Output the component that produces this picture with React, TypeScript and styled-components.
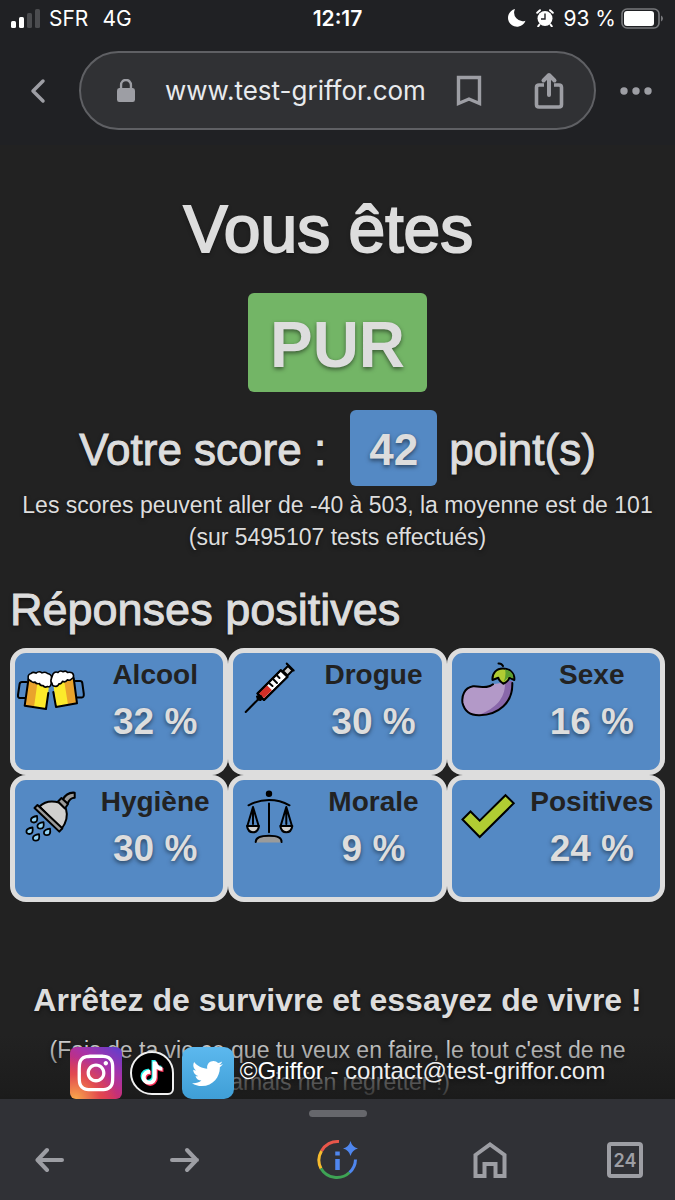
import type { ReactNode } from "react"
import styled, { createGlobalStyle } from "styled-components"
import { FaInstagram, FaTiktok, FaTwitter } from "react-icons/fa"

type Category = {
    id: number;
    name: string;
    score: number;
    icon: ReactNode;
};

const BeerIcon = () => (
    <Emoji viewBox="0 0 72 72">
        <path fill="none" d="M11.5 29H7q-2 0-2.400 2L3 42q-.3 3 2 3h6" />
        <path fill="none" d="M60.500 28H65q2 0 2.300 2l1.500 11q.2 3.500-2 3.500h-5.500" />
        <path stroke="none" fill="#fcea2b" d="M13.500 24 9.700 52.700 31 56l3-23-1-10Z" />
        <path stroke="none" fill="#e9a32c" d="M13.500 26 9.700 52.700l9.300 1.500L22.500 29Z" />
        <path stroke="none" fill="#fcea2b" d="M38 28l3 26 21-3.700L58.500 23Z" />
        <path stroke="none" fill="#e9a32c" d="M49.500 30 53 51.800l9-1.500L58.500 24Z" />
        <path fill="none" d="M13.500 26 9.700 52.700 31 56l2.300-16M38.300 39 41 54l21-3.700L58.700 25" />
        <path fill="#fff" strokeWidth="1.600" d="M13.500 26.500q-1.500-5 2.500-6 2-2 5-.4 3-2.500 6-.2 3-1.500 5.500.6 4.500 1 4 4.500 1 4-.5 6-.5 3.500-3.500 2.500-3 1.500-4.500-1-3 .5-3.500-2-3 1-4.500-1.500-2 1-3.500-.5Z" />
        <path fill="#fff" strokeWidth="1.600" d="M38 21q2-3 5-1.500 2-2.500 5-.8 3-1.500 4.500.8 5-1 6 2.500.5 3-2 4-2 2-4 .8-2 3-5 1.500-1 3-3.500 2.500-1 3-4 2.500-3 0-3-3-2-2-.5-5Z" />
    </Emoji>
)

const SyringeIcon = () => (
    <Emoji viewBox="0 0 72 72">
        <path d="M12.700 59 26 45.500" />
        <path fill="#d0cfce" d="m50 18 5-5 4.500 4.500-5 5Z" />
        <path d="m53.700 10.500 7 7" />
        <path fill="#fff" d="m24.500 40.500 23.300-23.300 6.700 6.700L31 47Z" />
        <path stroke="none" fill="#d22f27" d="m25.800 40.500 8.200-8.200 5 5-8 8Z" />
        <path d="m24.500 40.500 23.300-23.300 6.700 6.700L31 47Z" fill="none" />
        <path d="m24 43.500 3.500 3.500M36 30l3.500 3M40 26l4 4M44 22.500l2.500 2.500" />
        <circle cx="26.500" cy="44.800" r="2" fill="#000" />
    </Emoji>
)

const EggplantIcon = () => (
    <Emoji viewBox="0 0 72 72">
        <path stroke="none" fill="#b399c8" d="M41 31.300c-6 5-13 1.500-20 2C12 35 9.500 43 10.500 50c2 8 8 12.500 17 12.300C46 62 61 50 60.300 28Z" />
        <path stroke="none" fill="#8967aa" d="M53 28c1 17-9 27-25 33.500C46 62 61 50 60.300 28Z" />
        <path fill="none" d="M41 31.300c-6 5-13 1.500-20 2C12 35 9.500 43 10.500 50c2 8 8 12.500 17 12.300C46 62 61 50 60.300 30" />
        <path fill="#b1cc33" d="M40.500 27c-.5-7 4-11.500 10.500-11.500S63 20 62.300 27l-5-2.300q-1 4-6 6-4.500-3-5-6Z" />
        <path stroke="none" fill="#5c9e31" d="M53 16.500c6 1 8.500 4 8.300 9l-4.300-2-5.500 5.500q3-6 1.500-12.500Z" />
        <path fill="none" d="M46.500 10.500q3-.3 4.500 2.500" />
    </Emoji>
)

const ShowerIcon = () => (
    <Emoji viewBox="0 0 72 72">
        <path fill="#9b9b9a" d="M59.700 12.700q-8-.8-12 7l5 4q2-6 7-6Z" />
        <path fill="#d0cfce" d="M24.500 26.500Q32 19 44 22.500l7 6.500q3 10-4.500 20Z" />
        <path fill="#9b9b9a" d="m43 21.500 3.500-3.500 6.500 6-3 4.500Z" />
        <path fill="#9b9b9a" d="m19.500 28 3-3 24.800 23.300-3 3.300Z" />
        {[[19, 39.500], [25.500, 45.700], [14.500, 51], [32, 52.200], [21, 57.700]].map(([x, y]) => (
            <path key={x} fill="#92d3f5" strokeWidth="1.800" d={`M${x + 3} ${y - 3.500}q1.200 6.500-3 6.500-3.500-.2-3-3.200.7-2.600 6-3.300Z`} />
        ))}
    </Emoji>
)

const ScalesIcon = () => (
    <Emoji viewBox="0 0 72 72">
        <circle cx="36" cy="13.700" r="2.200" fill="#000" />
        <path fill="none" d="M15.500 25.300Q25 20 36 20t20.500 5.300M36 23.500v28.800" />
        <path stroke="none" fill="#9b9b9a" d="M22.700 62.500q1.500-7 13.300-7t12.500 7Z" />
        <path fill="none" d="M22.700 62q0-6.300 13.300-6.300T48.500 62" />
        {[20, 53.300].map((x) => (
            <g key={x}>
                <path fill="#d0cfce" d={`M${x - 6} 46h12q-1 6.300-6 6.300t-6-6.300Z`} />
                <path fill="none" d={`M${x - 5.500} 45.500 ${x} 27l5.500 18.500M${x} 28v16`} />
            </g>
        ))}
    </Emoji>
)

const CheckIcon = () => (
    <Emoji viewBox="0 0 72 72">
        <path fill="#b1cc33" strokeLinejoin="miter" d="m10.500 39.500 8-8 9.200 9.200 25.800-25.500 8.200 8.100-34 33.700Z" />
    </Emoji>
)

const categories: Category[] = [
    { id: 1, name: "Alcool", score: 32, icon: <BeerIcon /> },
    { id: 2, name: "Drogue", score: 30, icon: <SyringeIcon /> },
    { id: 3, name: "Sexe", score: 16, icon: <EggplantIcon /> },
    { id: 4, name: "Hygiène", score: 30, icon: <ShowerIcon /> },
    { id: 5, name: "Morale", score: 9, icon: <ScalesIcon /> },
    { id: 6, name: "Positives", score: 24, icon: <CheckIcon /> },
]

const StatusBar = () => (
    <Status>
        <StatusGroup $side="start">
            <svg width="30" height="20" viewBox="0 0 30 20">
                <rect x="0" y="13" width="5" height="7" rx="1.500" fill="#fff" />
                <rect x="8" y="9" width="5" height="11" rx="1.500" fill="#fff" />
                <rect x="16" y="5" width="5" height="15" rx="1.500" fill="#4b4c4f" />
                <rect x="24" y="1" width="5" height="19" rx="1.500" fill="#4b4c4f" />
            </svg>
            <Carrier>SFR</Carrier>
            <span>4G</span>
        </StatusGroup>
        <Clock>12:17</Clock>
        <StatusGroup $side="end">
            <svg width="18" height="18" viewBox="0 0 18 18">
                <path fill="#fff" d="M7 0A9 9 0 1 0 17.500 11.800 8.600 8.600 0 0 1 7 0Z" />
            </svg>
            <Alarm width="18" height="18" viewBox="0 0 18 18">
                <circle cx="9" cy="9.500" r="7.500" fill="#fff" />
                <path d="M1.200 3.800 4 1.200M16.800 3.800 14 1.200M3.500 15.500l-1.300 1.800M14.500 15.500l1.300 1.800" stroke="#fff" strokeWidth="2" strokeLinecap="round" />
                <path d="M9 4.500v5.500H5" fill="none" stroke="#202124" strokeWidth="1.400" />
            </Alarm>
            <span>93 %</span>
            <Battery width="43" height="21" viewBox="0 0 43 21">
                <rect x="1" y="1" width="37" height="19" rx="5" fill="none" stroke="#77787b" strokeWidth="1.600" />
                <rect x="3" y="3" width="30" height="15" rx="3" fill="#fff" />
                <path d="M40 7.500q2 .8 2 3t-2 3Z" fill="#77787b" />
            </Battery>
        </StatusGroup>
    </Status>
)

const AddressBar = () => (
    <Address>
        <BarButton aria-label="Retour">
            <svg width="20" height="26" viewBox="0 0 20 26">
                <path d="M13 3 3 13l10 10" {...line} strokeWidth="3.500" />
            </svg>
        </BarButton>
        <UrlPill>
            <svg width="18" height="24" viewBox="0 0 20 24" preserveAspectRatio="none">
                <rect x="0" y="9" width="20" height="14" rx="2.500" fill="#9d9ea4" />
                <path d="M4.500 10V6a5.500 5 0 0 1 11 0v4" fill="none" stroke="#9d9ea4" strokeWidth="2.600" />
            </svg>
            <UrlText href="#">www.test-griffor.com</UrlText>
            <PillButton aria-label="Favori">
                <svg width="26" height="32" viewBox="0 0 26 32">
                    <path d="M2.500 2.500h21v26L13 24 2.500 28.500Z" fill="none" stroke="#9d9ea4" strokeWidth="3.400" />
                </svg>
            </PillButton>
            <PillButton aria-label="Partager">
                <svg width="30" height="38" viewBox="0 0 30 38">
                    <path d="M10 13H5q-2.500 0-2.500 2.500v17Q2.500 35 5 35h20q2.500 0 2.500-2.500v-17Q27.500 13 25 13h-5" fill="none" stroke="#9d9ea4" strokeWidth="3.600" />
                    <path d="M15 23V4M9.500 8.500 15 3l5.500 5.500" {...line} />
                </svg>
            </PillButton>
        </UrlPill>
        <BarButton aria-label="Menu">
            <svg width="32" height="8" viewBox="0 0 32 8">
                <circle cx="4" cy="4" r="3.700" fill="#9d9ea4" />
                <circle cx="16" cy="4" r="3.700" fill="#9d9ea4" />
                <circle cx="28" cy="4" r="3.700" fill="#9d9ea4" />
            </svg>
        </BarButton>
    </Address>
)

const line = {
    fill: "none",
    stroke: "#9d9ea4",
    strokeWidth: 4,
    strokeLinecap: "round",
    strokeLinejoin: "round",
} as const

const BottomBar = () => (
    <Bottom>
        <Handle />
        <Tools>
            <ToolGroup>
                <BarButton aria-label="Page précédente">
                    <svg width="30" height="26" viewBox="0 0 30 26"><path d="M27 13H3M12 3 2.500 13l9.500 10" {...line} /></svg>
                </BarButton>
                <BarButton aria-label="Page suivante">
                    <svg width="30" height="26" viewBox="0 0 30 26"><path d="M2 13h25M17 3l9.500 10L17 23" {...line} /></svg>
                </BarButton>
            </ToolGroup>
            <BarButton aria-label="Informations">
                <svg width="42" height="42" viewBox="0 0 42 42" fill="none" strokeWidth="3">
                    <path d="M23 2.500A18 18 0 0 0 5.500 12" stroke="#e8564a" />
                    <path d="M5.500 12a18 18 0 0 0-.5 17.500" stroke="#f6bb2e" />
                    <path d="M5 29.500a18.500 18.500 0 0 0 28.500 4" stroke="#3ea355" />
                    <path d="M33.500 33.500a18 18 0 0 0 6-13" stroke="#4f86ee" />
                    <path d="M21.500 12.500v4M21.500 20v11" stroke="#4f86ee" strokeWidth="4.500" />
                    <path d="M34.500 2q1.500 6 7.500 7.500-6 1.500-7.500 7.500-1.500-6-7.500-7.500 6-1.500 7.500-7.500Z" fill="#4f86ee" stroke="none" />
                </svg>
            </BarButton>
            <ToolGroup>
                <BarButton aria-label="Accueil">
                    <svg width="34" height="38" viewBox="0 0 34 38">
                        <path d="M2.500 14 17 3.500 31.500 14v21h-9V23h-11v12h-9Z" fill="none" stroke="#9d9ea4" strokeWidth="4" />
                    </svg>
                </BarButton>
                <TabsButton aria-label="Onglets">24</TabsButton>
            </ToolGroup>
        </Tools>
    </Bottom>
)

export default function App() {
    return (
        <Shell>
            <GlobalStyle />
            <Header>
                <StatusBar />
                <AddressBar />
            </Header>

            <Page>
                <Title>Vous êtes&nbsp;</Title>
                <Result>PUR</Result>
                <Score>
                    <span>Votre score :</span>
                    <Points>42</Points>
                    <span>point(s)</span>
                </Score>
                <Note>
                    Les scores peuvent aller de -40 à 503, la moyenne est de 101
                    <br />
                    (sur 5495107 tests effectués)
                </Note>

                <Subtitle>Réponses positives</Subtitle>
                <Cards>
                    {categories.map((category) => (
                        <Card key={category.id}>
                            {category.icon}
                            <CardText>
                                <CardName>{category.name}</CardName>
                                <CardScore>{category.score} %</CardScore>
                            </CardText>
                        </Card>
                    ))}
                </Cards>

                <Advice>Arrêtez de survivre et essayez de vivre !</Advice>
                <Note>
                    (Fais de ta vie ce que tu veux en faire, le tout c'est de ne
                    <br />
                    jamais rien regretter !)
                </Note>

                <Footer>
                    <Instagram href="#" aria-label="Instagram"><FaInstagram size={42} /></Instagram>
                    <Tiktok href="#" aria-label="TikTok">
                        <svg width="26" height="28" viewBox="0 0 24 26">
                            <FaTiktok x="0" y="1" size={22} color="#25f4ee" />
                            <FaTiktok x="2" y="3" size={22} color="#fe2c55" />
                            <FaTiktok x="1" y="2" size={22} color="#fff" />
                        </svg>
                    </Tiktok>
                    <Twitter href="#" aria-label="Twitter"><FaTwitter size={31} /></Twitter>
                    <Copyright>
                        ©Griffor - <Mail href="#">contact@test-griffor.com</Mail>
                    </Copyright>
                </Footer>
            </Page>

            <BottomBar />
        </Shell>
    )
}

const GlobalStyle = createGlobalStyle`
* {
    box-sizing: border-box;
}
body {
    margin: 0;
    background: #222222;
}
button {
    padding: 0;
    border: none;
    background: none;
}
svg {
    display: block;
    flex: none;
}
`

const Shell = styled.div`
display: flex;
flex-direction: column;
height: 100vh;
color: #dddddd;
font-family: "Liberation Sans", Arial, sans-serif;
`

const Header = styled.header`
padding-bottom: 15px;
background: #202124;
font-family: Inter, sans-serif;
`

const Status = styled.div`
display: grid;
grid-template-columns: 1fr auto 1fr;
align-items: center;
height: 36px;
padding: 0 11px;
color: #ffffff;
font-size: 21px;
`

const StatusGroup = styled.div<{ $side: string }>`
display: flex;
align-items: center;
justify-content: ${(props) => props.$side};
`

const Carrier = styled.span`
margin: 0 14px 0 8px;
`

const Clock = styled.span`
font-weight: 600;
`

const Alarm = styled.svg`
margin: 0 9px 0 10px;
`

const Battery = styled.svg`
margin-left: 5px;
`

const Address = styled.div`
display: flex;
align-items: center;
margin-top: 15px;
`

const BarButton = styled.button`
display: flex;
align-items: center;
justify-content: center;
width: 79px;
height: 60px;
`

const UrlPill = styled.div`
display: flex;
flex: 1;
align-items: center;
height: 79px;
padding: 0 30px 0 36px;
border: 2px solid #5f6064;
border-radius: 40px;
background: #303134;
`

const UrlText = styled.a`
flex: 1;
margin-left: 30px;
color: #e8eaed;
font-size: 26px;
text-decoration: none;
white-space: nowrap;
`

const PillButton = styled.button`
margin-left: 52px;

&:first-of-type {
    margin-left: 28px;
}
`

const Page = styled.main`
position: relative;
flex: 1;
min-height: 0;
padding: 48px 10px 0;
overflow: hidden;
text-align: center;
text-shadow: 0 2px 4px rgba(0, 0, 0, 0.5);
`

const Title = styled.h1`
margin: 0 0 28px;
font-size: 66px;
font-weight: 400;
line-height: 72px;
-webkit-text-stroke: 2px #dddddd;
`

const Result = styled.strong`
display: block;
width: fit-content;
margin: 0 auto;
padding: 20px 22px 15px;
border-radius: 6px;
background: #73b566;
font-size: 64px;
line-height: 64px;
`

const Score = styled.h2`
display: flex;
align-items: baseline;
justify-content: center;
margin: 18px 0 3px;
font-size: 44px;
font-weight: 400;
-webkit-text-stroke: 1px #dddddd;
`

const Points = styled.strong`
margin: 0 12px 0 24px;
padding: 4px 19px 0;
border-radius: 6px;
background: #5489c4;
line-height: 72px;
-webkit-text-stroke: 0;
`

const Note = styled.p`
margin: 0 -10px;
font-size: 23px;
line-height: 32px;
`

const Subtitle = styled.h2`
margin: 32px 0 13px;
font-size: 45px;
font-weight: 400;
line-height: 50px;
text-align: left;
-webkit-text-stroke: 1px #dddddd;
`

const Cards = styled.div`
display: grid;
grid-template-columns: repeat(3, 1fr);
`

const Card = styled.div`
display: flex;
height: 127px;
border: 5px solid #dddddd;
border-radius: 16px;
background: #5489c4;
font-weight: bold;
`

const Emoji = styled.svg`
width: 72px;
height: 72px;
stroke: #000000;
stroke-width: 2px;
stroke-linecap: round;
stroke-linejoin: round;
`

const CardText = styled.div`
flex: 1;
padding-top: 6px;
`

const CardName = styled.div`
color: #222222;
font-size: 28px;
line-height: 32px;
text-shadow: none;
`

const CardScore = styled.div`
margin-top: 8px;
font-size: 37px;
line-height: 46px;
`

const Advice = styled.h3`
margin: 78px 0 14px;
font-size: 32px;
line-height: 40px;
`

const Footer = styled.footer`
position: absolute;
right: 0;
bottom: 0;
left: 0;
display: flex;
align-items: flex-end;
justify-content: center;
height: 64px;
background: linear-gradient(rgba(27, 27, 27, 0), rgba(27, 27, 27, 0.9));
`

const SocialLink = styled.a`
display: flex;
align-items: center;
justify-content: center;
width: 52px;
height: 52px;
border-radius: 6px;
color: #ffffff;
`

const Instagram = styled(SocialLink)`
background:
    radial-gradient(circle at 10% 100%, #f9a84b 0%, rgba(234, 90, 69, 0.6) 35%, transparent 60%),
    linear-gradient(215deg, #5b3fd0 0%, #a832a8 35%, #d62f5c 70%);
`

const Tiktok = styled(SocialLink)`
width: 44px;
height: 44px;
margin: 0 8px 4px;
border: 2px solid #f0f0f0;
border-radius: 22px 22px 6px 22px;
background: #000000;
`

const Twitter = styled(SocialLink)`
border-radius: 10px;
background: linear-gradient(#5cb8ee, #3f9ed6);
`

const Copyright = styled.span`
margin-left: 6px;
color: #ffffff;
font-size: 24px;
line-height: 56px;
`

const Mail = styled.a`
color: #eeeeee;
text-decoration: none;
`

const Bottom = styled.nav`
height: 101px;
padding-top: 11px;
background: #303136;
box-shadow: 0 0 6px rgba(0, 0, 0, 0.5);
`

const Handle = styled.div`
width: 58px;
height: 7px;
margin: 0 auto;
border-radius: 4px;
background: #66676c;
`

const Tools = styled.div`
display: flex;
align-items: center;
justify-content: space-between;
margin-top: 13px;
padding: 0 10px;
`

const ToolGroup = styled.div`
display: flex;
align-items: center;
gap: 56px;
`

const TabsButton = styled.button`
width: 36px;
height: 36px;
margin: 0 22px;
border: 4px solid #9d9ea4;
border-radius: 4px;
color: #9d9ea4;
font-family: Inter, sans-serif;
font-size: 18px;
font-weight: 600;
`
